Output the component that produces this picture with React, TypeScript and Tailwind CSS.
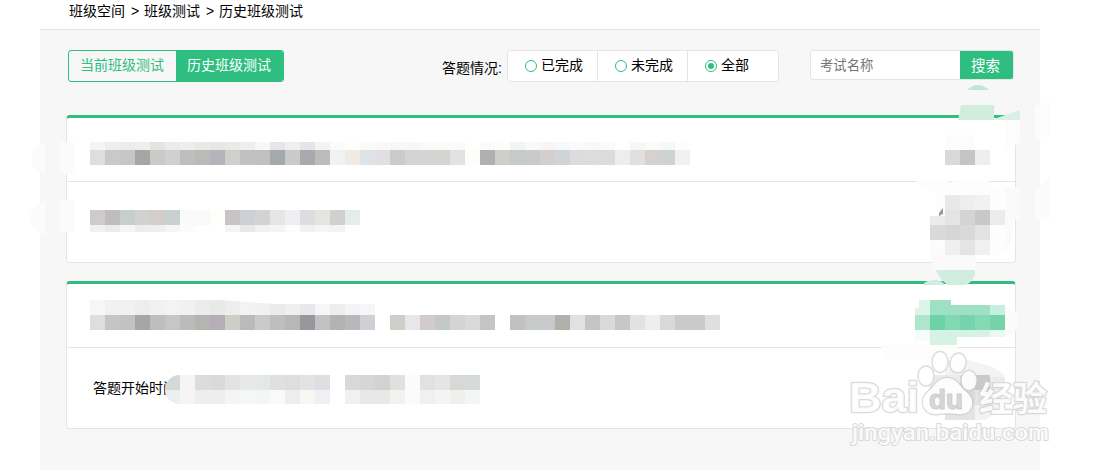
import React from 'react';

interface MosaicRow {
  height: number;
  cells: string;
}

interface Block {
  x: number;
  y: number;
  w?: number;
  h?: number;
  fill: string;
}

const crumbs = ['班级空间', '班级测试', '历史班级测试'];

const statusOptions = [
  { label: '已完成', checked: false },
  { label: '未完成', checked: false },
  { label: '全部', checked: true },
];

// cells are 15px wide, '-' leaves a gap
const firstTitle: MosaicRow[] = [
  {
    height: 8,
    cells:
      'f4f4f4 eeeeec ebeced eeeeee e4e4e1 ebebeb ededeb e8eae9 e6e7e7 eaeae8 edeef0 f7f7f7 e6e6e6 f0eeef e5e4e8 f3f3f3 fbfbfb fefefa fafafa f9f9f7 f7f7f7 f7f7f7 fafafa fafafa fafafa - fbfafc fdfdfa f3f5f4 f9f9fa f7f5f5 f7f8f8 fbfafa f8f8f8 fafafa - f7f7f7 fafbfb f7f7f6 fcfefe',
  },
  {
    height: 15,
    cells:
      'dededc c9c9c9 c6c6c6 a6a6a4 cacac8 d0d0d0 bebebe b9bbb6 b6b3bb cfcfcd c1c1c1 c1bfc0 a4a9ab cacaca aaa9af bcbcbc f1f3f2 efebe2 dce4e7 e1dfe2 cbccc8 d4d4d4 d4d4d4 d5d4d1 e2e2e2 fffdfa b0b0b2 cfcfca c4cbca cacacc d5cfcc ced4d7 dddbdc dcddde d9dcda efecf0 e0e0e0 d6d0cf cdd2d2 f1f1f1',
  },
];

const firstBody: MosaicRow[] = [
  {
    height: 15,
    cells:
      'cfcbcd bdbdbd c8cece d1d2d0 d4cecb c8d0d2 fafaf8 f8f9fa fffefb c6c4c5 cdd1d5 d1d4d2 e6e6e6 efeff2 dddde0 e4e4e1 d0d0ce e6ebeb',
  },
  {
    height: 7,
    cells:
      'f2eff0 ecedea f3f6f5 ebeeee f1efee f4f6f6 fcfcfc - - f7f5f4 e8e8e8 f1f1f1 f3f4f3 fcfcfd f1f1ef f5f5f4 f2f4f4 fdfdfd',
  },
];

const secondTitle: MosaicRow[] = [
  {
    height: 15,
    cells:
      'f6f6f6 f3f1f0 f1f1f1 ededee f1f1f1 f3f3f3 f1f1f1 ebedec e9e9e9 ededed f3f3f4 f3f1ef ebebeb efefef e9e7ea f5f7f7 ededed f3f4f5 f6f6f6',
  },
  {
    height: 15,
    cells:
      'dededc c5c5c5 c2c2c2 a6a6a4 bebebc c6c6c6 b9bbbd b4b5b0 b5aeb7 cdcec8 bababa cacaca c0bdbe b7b7b5 99979c c2c2c2 b4b2b3 b7b9b9 cfd0d6 - cecfc9 e9e6ea d1cccb c3c8c9 d6d3d5 dadada c4c5c7 - c3c0c1 c6cac9 c7c9cb b1b0ab e0e1e3 c4c6c5 dadadb c7c7c7 e1e3e2 edefec dad8da cacaca cacaca dfdfdf',
  },
];

const secondBody: MosaicRow[] = [
  {
    height: 15,
    cells:
      'd2dada f5f6f3 dbdddc dadad8 e2e3e2 e7e8e8 e5e8e8 e0e1de dddedf e1e3e5 dedfe2 - d9d9d9 d5d7d7 d4d1d3 e0e0de fbfbfb e1e1e1 e5e5e5 dad8d6 d6dad9',
  },
  {
    height: 14,
    cells:
      'ebeff1 f5f6f3 edefed eceef0 f5f5f5 f5f6f7 f4f5f7 f9faf7 ededee f7f7f4 eef0f3 - f0f0ef e7e9e8 e8e8e8 f2f2ef fbfbfb f0f0f0 f4f4f4 efefed f4f6f5',
  },
];

const blocks: Block[] = [
  { x: 945, y: 135, w: 30, fill: '#fcfcfc' },
  { x: 945, y: 150, fill: '#dad9d8' },
  { x: 960, y: 150, fill: '#c5c5c5' },
  { x: 975, y: 150, fill: '#edeeef' },
  { x: 945, y: 195, fill: '#e8e8e8' },
  { x: 960, y: 195, fill: '#eeeeee' },
  { x: 975, y: 195, fill: '#f1f1f1' },
  { x: 930, y: 216, h: 9, fill: '#ebebeb' },
  { x: 945, y: 210, fill: '#e4e4e4' },
  { x: 960, y: 210, fill: '#d4d4d4' },
  { x: 975, y: 210, fill: '#c8c8c8' },
  { x: 990, y: 210, fill: '#ececec' },
  { x: 930, y: 225, fill: '#d9d9d9' },
  { x: 945, y: 225, fill: '#d6d6d6' },
  { x: 960, y: 225, fill: '#d9d9d9' },
  { x: 975, y: 225, fill: '#e3e3e3' },
  { x: 930, y: 240, fill: '#fcfcfc' },
  { x: 945, y: 240, fill: '#efefef' },
  { x: 960, y: 240, fill: '#e4e4e4' },
  { x: 975, y: 240, fill: '#f0f0f0' },
  { x: 919, y: 300, w: 11, h: 8, fill: '#ddf4ea' },
  { x: 915, y: 308, h: 7, fill: '#ddf4ea' },
  { x: 930, y: 300, w: 21, h: 5, fill: '#9fe0c3' },
  { x: 930, y: 305, w: 60, h: 10, fill: '#9de0c3' },
  { x: 990, y: 305, h: 10, fill: '#c8eedd' },
  { x: 915, y: 315, fill: '#ade6cc' },
  { x: 930, y: 315, fill: '#6dd3a7' },
  { x: 945, y: 315, fill: '#81d8b1' },
  { x: 960, y: 315, fill: '#75d4ab' },
  { x: 975, y: 315, fill: '#85d9b5' },
  { x: 990, y: 315, fill: '#73d3a9' },
  { x: 915, y: 330, h: 11, fill: '#f5fcf9' },
  { x: 930, y: 330, w: 27, fill: '#d6f2e5' },
  { x: 957, y: 330, w: 33, h: 7, fill: '#d6f2e5' },
  { x: 990, y: 330, h: 7, fill: '#e9f8f1' },
];

const Mosaic: React.FC<{ rows: MosaicRow[]; className?: string }> = ({ rows, className }) => (
  <div className={className}>
    {rows.map((row, i) => (
      <div key={i} className="flex" style={{ height: row.height }}>
        {row.cells.split(' ').map((cell, j) => (
          <div
            key={j}
            className="w-[15px] shrink-0"
            style={{ backgroundColor: cell === '-' ? 'transparent' : `#${cell}` }}
          />
        ))}
      </div>
    ))}
  </div>
);

const Card: React.FC<{ header: React.ReactNode; children: React.ReactNode }> = ({ header, children }) => (
  <div className="h-[148px] rounded-[4px] border border-t-[3px] border-[#e5e5e5] border-t-[#2dbe80] bg-white">
    <div className="h-16 border-b border-[#e5e5e5] pl-[23px]">{header}</div>
    <div className="pl-[23px]">{children}</div>
  </div>
);

const Smudges: React.FC = () => (
  <g>
    <path d="M45 143C27 146 27 171 45 174Z M60 142h15v32h-15Z" fill="#fbfbfb" />
    <path d="M45 201C25 206 25 230 45 235Z M60 200h15v32h-15Z" fill="#fbfbfb" />
    <path d="M967 90Q978 80 989 90Z" fill="#bfe6d6" />
    <path d="M961 105h33v15h-36Z" fill="#d1ede0" />
    <path d="M994 119l26-9v10h-26Z" fill="#dbefe6" />
    <path d="M1005 120h15v23l-15 6Z M1035 106l15-4v33l-15 4Z" fill="#fcfcfc" />
    <path d="M916 180h34q-6 12-18 12q-10 0-16-12Z" fill="#fdfdfd" />
    <path d="M957 180h32l1 5l15 2v61l-8 8h-60v-60q5-12 20-16Z" fill="#fdfdfd" />
    <path d="M1005 187h15v32h-7l-1 18q-2 9-7 13Z" fill="#fafafa" />
    <path d="M1035 187h5l10-9v41h-15Z" fill="#fbfbfb" />
    <path d="M943 208v6l-4 2q-1-3 4-8Z" fill="#999" />
    <path d="M930 255h46v8l-1 7h-39q-6-7-6-15Z" fill="#fafafa" />
    <path d="M936 270h39v5q-3 7-9 10h-18q-8-5-12-15Z" fill="#d1ece0" />
    <path d="M923 285q2-5 13-5q5 0 9 5Z" fill="#d1ece0" />
    <path d="M1005 306q14 4 14 15t-14 16Z" fill="#fbfbfb" />
    <path d="M881 345h76v14h-71Z" fill="#fdfdfd" />
    {blocks.map((b) => (
      <rect key={`${b.x}-${b.y}`} x={b.x} y={b.y} width={b.w ?? 15} height={b.h ?? 15} fill={b.fill} />
    ))}
    <path d="M945 360h23l22 6q12 5 15 11v13l-5 15q-6 11-15 15h-40Z" fill="#f3f3f3" />
    <path d="M930 375h30v15h-30Z M990 377h13l2 2v11h-15Z" fill="#ebebeb" />
    <path d="M975 375h15v15h-15Z" fill="#c9c9c9" />
    <path d="M930 390h30v15h-30Z M960 375h15v30h-15Z" fill="#dadada" />
    <path d="M975 390h15v15h-15Z M945 405h30v15h-30Z" fill="#e4e4e4" />
  </g>
);

const Watermark: React.FC = () => (
  <g
    fill="#fff"
    fillOpacity="0.9"
    stroke="#cbcbcb"
    strokeOpacity="0.7"
    strokeWidth="2.5"
    strokeLinejoin="round"
    style={{ paintOrder: 'stroke' }}
    className="font-['Liberation_Sans','Noto_Sans_CJK_SC',sans-serif]"
  >
    <text x="849" y="412" fontSize="43" fontWeight="700" textLength="70" lengthAdjust="spacingAndGlyphs">
      Bai
    </text>
    <ellipse cx="926" cy="376" rx="7.5" ry="9.5" />
    <ellipse cx="940" cy="362" rx="7.5" ry="10" />
    <ellipse cx="958" cy="363" rx="7.5" ry="9.5" transform="rotate(12 958 363)" />
    <ellipse cx="969" cy="380.5" rx="7.5" ry="9.5" />
    <path d="M947 378c-9 0-12 7-17 12c-5 4-8 8-7 15c2 7 8 10 15 9c6-1 13-1 19 0c8 1 14-2 15-9c1-7-3-11-8-15c-5-5-8-12-17-12Z" />
    <text
      x="929"
      y="409"
      fontSize="27"
      fontWeight="700"
      fill="#d2d2d2"
      stroke="#b5b5b5"
      strokeWidth="1.2"
      textLength="34"
      lengthAdjust="spacingAndGlyphs"
    >
      du
    </text>
    <text x="979" y="411" fontSize="34" fontWeight="700" textLength="68">
      经验
    </text>
    <text
      x="852"
      y="440"
      fontSize="22"
      fontWeight="500"
      strokeWidth="2"
      textLength="197"
      lengthAdjust="spacingAndGlyphs"
      className="font-[Roboto,sans-serif]"
    >
      jingyan.baidu.com
    </text>
  </g>
);

const App: React.FC = () => {
  return (
    <div className="relative h-[470px] w-[1108px] overflow-hidden bg-white font-['Liberation_Sans','Noto_Sans_CJK_SC',sans-serif] text-sm text-black">
      <div className="mx-10 flex h-[29px] items-start gap-1.5 pl-[29px] leading-[22px]">
        {crumbs.map((crumb, i) => (
          <React.Fragment key={crumb}>
            {i > 0 && <span className="w-[7px]">&gt;</span>}
            <span>{crumb}</span>
          </React.Fragment>
        ))}
      </div>

      <div className="ml-10 h-[441px] w-[1000px] border-t border-[#e5e5e5] bg-[#f7f7f7] pt-5">
        <div className="flex h-[65px] items-start pl-7">
          <div className="flex h-8 w-[216px] overflow-hidden rounded-[3px] border border-[#2dbe80] leading-7">
            <button className="flex w-[107px] shrink-0 pl-[11px] text-[#2dbe80]">当前班级测试</button>
            <button className="flex flex-1 bg-[#2dbe80] pl-[11px] text-white">历史班级测试</button>
          </div>

          <span className="ml-[158px] w-[65px] leading-9">答题情况:</span>
          <div className="flex h-8 w-[272px] divide-x divide-[#e5e5e5] rounded-[4px] border border-[#e5e5e5] bg-white">
            {statusOptions.map((option) => (
              <label key={option.label} className="flex h-[30px] w-[90px] items-start pl-[17px]">
                <span className="mt-[9px] flex size-3 items-center justify-center rounded-full border border-[#2dbe80]">
                  {option.checked && <span className="size-1.5 rounded-full bg-[#2dbe80]" />}
                </span>
                <span className="ml-1 leading-7">{option.label}</span>
              </label>
            ))}
          </div>

          <div className="ml-[31px] flex h-[30px] w-[204px] rounded-[3px] border border-[#e5e5e5] bg-white">
            <input
              className="w-[149px] pt-0.5 pl-[9px] text-[13.333px] outline-none placeholder:text-[#757575]"
              placeholder="考试名称"
            />
            <button className="flex h-7 flex-1 items-center rounded-r-[2px] bg-[#2dbe80] pt-0.5 pl-[11px] text-[14.5px] text-white">
              搜索
            </button>
          </div>
        </div>

        <div className="flex w-[976px] flex-col gap-[18px] pl-[26px]">
          <Card header={<Mosaic rows={firstTitle} className="pt-6" />}>
            <Mosaic rows={firstBody} className="pt-7" />
          </Card>
          <Card header={<Mosaic rows={secondTitle} className="pt-4" />}>
            <div className="flex pt-[27px]">
              <span className="ml-[3px] w-[72px] shrink-0 whitespace-nowrap leading-[26px]">答题开始时间</span>
              <Mosaic rows={secondBody} className="z-10 overflow-hidden rounded-l-[15px]" />
            </div>
          </Card>
        </div>
      </div>

      <svg className="pointer-events-none absolute inset-0" width="1108" height="470" viewBox="0 0 1108 470">
        <path d="M220 300h155v4h-100l-28-2Z" fill="#fff" />
        <Smudges />
        <Watermark />
      </svg>
    </div>
  );
};

export default App;
